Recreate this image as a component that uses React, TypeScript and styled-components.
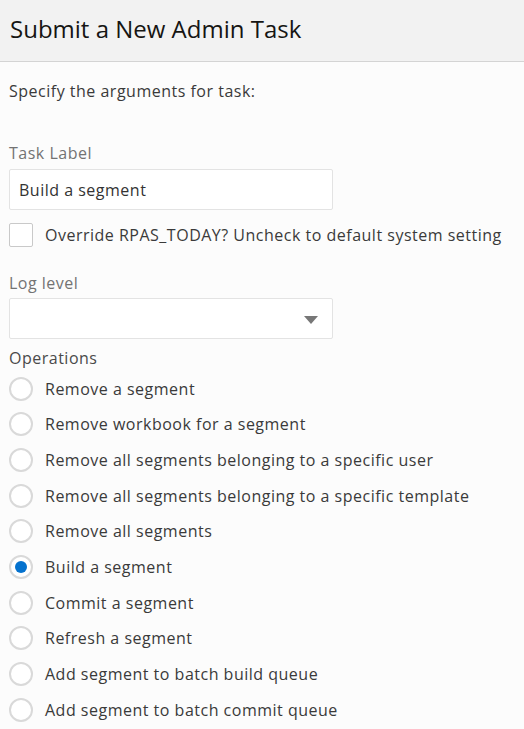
import styled, { createGlobalStyle } from 'styled-components';

const GlobalStyle = createGlobalStyle`
  html, body {
    margin: 0;
    padding: 0;
    background: #fcfcfc;
  }
  body {
    font-family: "Open Sans", "Noto Sans", "Liberation Sans", sans-serif;
    color: #3a3a3a;
  }
`;

const OPERATIONS = [
  'Remove a segment',
  'Remove workbook for a segment',
  'Remove all segments belonging to a specific user',
  'Remove all segments belonging to a specific template',
  'Remove all segments',
  'Build a segment',
  'Commit a segment',
  'Refresh a segment',
  'Add segment to batch build queue',
  'Add segment to batch commit queue',
];

const SELECTED = 'Build a segment';

const App = () => {
  return (
    <Page>
      <GlobalStyle />
      <Header>
        <Title>Submit a New Admin Task</Title>
      </Header>
      <Body>
        <Intro>Specify the arguments for task:</Intro>

        <FieldLabel $gap={42}>Task Label</FieldLabel>
        <TextBox>Build a segment</TextBox>

        <CheckRow>
          <CheckBox />
          <OptionText>Override RPAS_TODAY? Uncheck to default system setting</OptionText>
        </CheckRow>

        <FieldLabel $gap={26}>Log level</FieldLabel>
        <SelectBox>
          <Caret />
        </SelectBox>

        <SectionLabel>Operations</SectionLabel>
        <RadioList>
          {OPERATIONS.map((op) => (
            <RadioRow key={op}>
              <Radio $checked={op === SELECTED} />
              <OptionText>{op}</OptionText>
            </RadioRow>
          ))}
        </RadioList>
      </Body>
    </Page>
  );
};

const Page = styled.div`
  width: 524px;
  min-height: 729px;
  background: #fcfcfc;
`;

const Header = styled.div`
  box-sizing: border-box;
  height: 62px;
  display: flex;
  align-items: center;
  padding: 0 10px 5px;
  background: #f2f2f2;
  border-bottom: 1px solid #d4d4d4;
`;

const Title = styled.h1`
  margin: 0;
  font-size: 24px;
  font-weight: 400;
  color: #161513;
`;

const Body = styled.div`
  padding: 0 9px;
  display: flex;
  flex-direction: column;
  align-items: flex-start;
  letter-spacing: 0.5px;
`;

const Intro = styled.div`
  margin-top: 19px;
  font-size: 16px;
  line-height: 20px;
  color: #3a3a3a;
`;

const FieldLabel = styled.div<{ $gap: number }>`
  margin-top: ${(p) => p.$gap}px;
  font-size: 16px;
  line-height: 20px;
  color: #737373;
`;

const SectionLabel = styled.div`
  margin-top: 9px;
  font-size: 16px;
  line-height: 20px;
  color: #4a4a4a;
`;

const TextBox = styled.div`
  margin-top: 6px;
  box-sizing: border-box;
  width: 324px;
  height: 41px;
  padding: 0 9px;
  display: flex;
  align-items: center;
  background: #ffffff;
  border: 1px solid #e3e3e3;
  border-radius: 2px;
  font-size: 16px;
  color: #333333;
`;

const SelectBox = styled(TextBox)`
  margin-top: 5px;
  justify-content: flex-end;
  padding-right: 14px;
`;

const Caret = styled.span`
  width: 0;
  height: 0;
  border-left: 7px solid transparent;
  border-right: 7px solid transparent;
  border-top: 8px solid #777777;
  margin-top: 2px;
`;

const CheckRow = styled.div`
  margin-top: 13px;
  height: 24px;
  display: flex;
  align-items: center;
  gap: 12px;
`;

const CheckBox = styled.span`
  box-sizing: border-box;
  width: 24px;
  height: 24px;
  background: #ffffff;
  border: 1px solid #c9c9c9;
  border-radius: 2px;
`;

const OptionText = styled.span`
  font-size: 16px;
  color: #3a3a3a;
  white-space: nowrap;
`;

const RadioList = styled.div`
  margin-top: 3px;
  display: flex;
  flex-direction: column;
`;

const RadioRow = styled.div`
  height: 35.67px;
  display: flex;
  align-items: center;
  gap: 12px;
`;

const Radio = styled.span<{ $checked: boolean }>`
  box-sizing: border-box;
  width: 24px;
  height: 24px;
  border-radius: 50%;
  background: #ffffff;
  border: 2px solid #d9d9d9;
  display: flex;
  align-items: center;
  justify-content: center;

  &::after {
    content: '';
    display: ${(p) => (p.$checked ? 'block' : 'none')};
    width: 12px;
    height: 12px;
    border-radius: 50%;
    background: #0572ce;
  }
`;

export default App;
